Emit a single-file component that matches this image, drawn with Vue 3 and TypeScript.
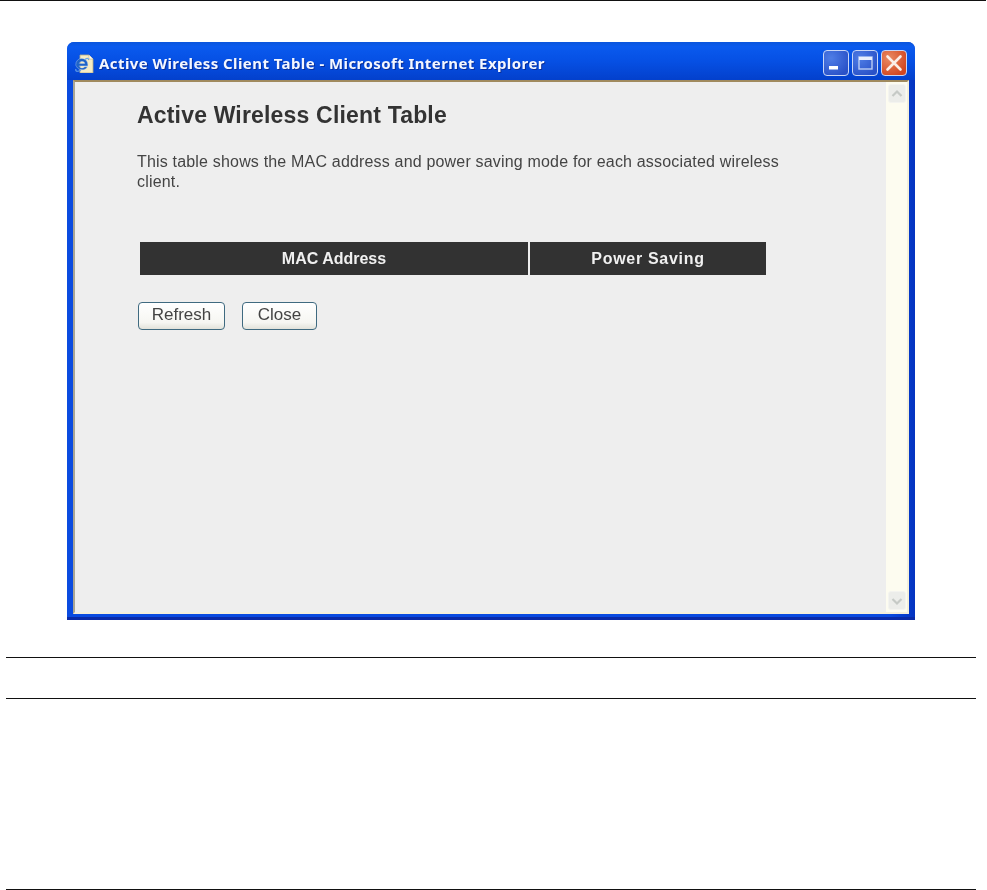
<script setup lang="ts">
const title = 'Active Wireless Client Table'
</script>

<template>
  <div class="page">
    <hr class="rule top" />
    <div class="window">
      <div class="titlebar">
        <svg class="ie" width="19" height="19" viewBox="0 0 19 19">
          <path d="M5 1h9l4 4v14H5z" fill="#f6ecc4" stroke="#b8ab80" stroke-width="0.8" />
          <path d="M14 1v4h4" fill="#fff" stroke="#b8ab80" stroke-width="0.6" />
          <path d="M0.800 10.500a6 6 0 0 1 12-.2v1.600H4.200c.3 2.400 4 2.700 5.600.8h2.700c-1.700 4-8.700 4.400-11-.1-.6-.8-.8-1.400-.7-2.100zM4.200 9.400h5.600c-.4-2.500-5-2.500-5.600 0z" fill="#1f64c8" stroke="#bcd4f2" stroke-width="0.4" />
          <path d="M1 15c-1 2.500 1.500 3 5 1.300M10 5.500c1.500-1.300 3.800-1.800 3.500.6" fill="none" stroke="#6ba4e6" stroke-width="1.100" />
        </svg>
        <span class="title">{{ title }} - Microsoft Internet Explorer</span>
        <div class="controls">
          <button class="ctl blue" aria-label="Minimize">
            <svg width="24" height="24" viewBox="0 0 24 24"><rect x="5" y="15" width="9" height="3.500" fill="#fff" /></svg>
          </button>
          <button class="ctl blue" aria-label="Maximize">
            <svg width="24" height="24" viewBox="0 0 24 24"><rect x="6" y="6" width="13" height="12" fill="none" stroke="#b9ccf4" stroke-width="1.400" /><rect x="6" y="6" width="13" height="3" fill="#e8eefc" /></svg>
          </button>
          <button class="ctl red" aria-label="Close">
            <svg width="24" height="24" viewBox="0 0 24 24"><path d="M5.500 5.500l13 13M18.500 5.500l-13 13" stroke="#fbeee8" stroke-width="2.600" stroke-linecap="round" /></svg>
          </button>
        </div>
      </div>
      <div class="frame">
        <main class="content">
          <h1>{{ title }}</h1>
          <p>This table shows the MAC address and power saving mode for each associated wireless client.</p>
          <div class="thead">
            <div class="th mac">MAC Address</div>
            <div class="th power">Power Saving</div>
          </div>
          <div class="actions">
            <button class="btn refresh">Refresh</button>
            <button class="btn close">Close</button>
          </div>
        </main>
        <aside class="scrollbar">
          <div class="sb-btn">
            <svg width="14" height="14" viewBox="0 0 14 14"><path d="M2.500 9l4.500-4.500 4.500 4.500" fill="none" stroke="#c6cac6" stroke-width="2.200" /></svg>
          </div>
          <div class="sb-btn">
            <svg width="14" height="14" viewBox="0 0 14 14"><path d="M2.500 5l4.500 4.500 4.500-4.500" fill="none" stroke="#c6cac6" stroke-width="2.200" /></svg>
          </div>
        </aside>
      </div>
    </div>
    <hr class="rule mid" />
    <hr class="rule low" />
    <hr class="rule bottom" />
  </div>
</template>

<style>
html, body { margin: 0; background: #fff; }
</style>

<style scoped>
.page {
  width: 987px;
  height: 890px;
  box-sizing: border-box;
  background: #fff;
  display: flex;
  flex-direction: column;
  padding-left: 6px;
  overflow: hidden;
  font-family: "Liberation Sans", Arial, sans-serif;
}
.rule {
  width: 970px;
  height: 1px;
  margin: 0;
  border: 0;
  background: #111;
  flex: none;
}
.top { width: 986px; margin: 0 0 41px -6px; }
.mid { margin-top: 37px; }
.low { margin-top: 40px; }
.bottom { margin-top: 190px; }
.window {
  width: 848px;
  height: 578px;
  margin-left: 61px;
  flex: none;
  box-sizing: border-box;
  display: flex;
  flex-direction: column;
  background: linear-gradient(90deg, #0a4be0 0, #0a4be0 97%, #0433c0 100%);
  border-radius: 7px 7px 0 0;
  padding: 0 6px 6px;
  box-shadow: inset 0 -3px 0 #0a2ba8;
  filter: blur(0.35px);
}
.titlebar {
  height: 38px;
  margin: 0 -6px;
  padding: 4px 8px 0;
  flex: none;
  display: flex;
  align-items: center;
  box-sizing: border-box;
  border-radius: 7px 7px 0 0;
  background: linear-gradient(#0a55dc 0, #0a5aee 12%, #0650e4 50%, #0340cc 100%);
}
.ie { flex: none; margin-right: 5px; }
.title {
  color: #f4f7ff;
  font: bold 15px "Noto Sans", sans-serif;
  letter-spacing: 0.420px;
  white-space: nowrap;
  text-shadow: 1px 1px 0 #0a2f9a;
}
.controls { margin-left: auto; display: flex; gap: 3px; }
.ctl {
  width: 26px;
  height: 26px;
  padding: 0;
  border: 1px solid #c8d6f6;
  border-radius: 4px;
  display: flex;
  align-items: center;
  justify-content: center;
}
.blue { background: radial-gradient(circle at 30% 30%, #4f7de6, #2a52c8 80%); }
.red { background: radial-gradient(circle at 30% 30%, #e98a64, #d3461f 80%); }
.frame {
  flex: 1;
  min-height: 0;
  display: flex;
  background: #eee;
  border-top: 2px solid #a08a5e;
  border-left: 2px solid #a9a595;
  border-right: 2px solid #f3efdc;
  border-bottom: 2px solid #f4efdc;
}
.content {
  flex: 1;
  min-width: 0;
  padding: 20px 0 0 62px;
}
h1 {
  margin: 0;
  font-size: 23px;
  letter-spacing: 0.180px;
  line-height: 26px;
  font-weight: bold;
  color: #333;
}
p {
  margin: 24px 0 0;
  width: 660px;
  font-size: 16px;
  letter-spacing: 0.180px;
  line-height: 20px;
  color: #444;
}
.thead {
  margin: 50px 0 0 3px;
  display: flex;
  gap: 2px;
  height: 33px;
}
.th {
  background: #323232;
  color: #f0f0f0;
  font-weight: bold;
  font-size: 16px;
  display: flex;
  align-items: center;
  justify-content: center;
}
.mac { width: 388px; }
.power { width: 236px; letter-spacing: 0.700px; }
.actions {
  margin: 27px 0 0 1px;
  display: flex;
  gap: 17px;
}
.btn {
  height: 28px;
  padding: 0 0 2px;
  font: 17px "Liberation Sans", Arial, sans-serif;
  color: #444;
  background: linear-gradient(#fff, #f6f6f2 75%, #e2e2da);
  border: 1.500px solid #3f6a80;
  border-radius: 4px;
}
.refresh { width: 87px; }
.close { width: 75px; }
.scrollbar {
  width: 21px;
  flex: none;
  display: flex;
  flex-direction: column;
  justify-content: space-between;
  align-items: center;
  padding: 2px 0;
  box-sizing: border-box;
  background: #fdfcf0;
}
.sb-btn {
  width: 18px;
  height: 19px;
  background: #ecedea;
  border: 1px solid #f4f4f0;
  border-radius: 3px;
  display: flex;
  align-items: center;
  justify-content: center;
  box-sizing: border-box;
}
</style>
